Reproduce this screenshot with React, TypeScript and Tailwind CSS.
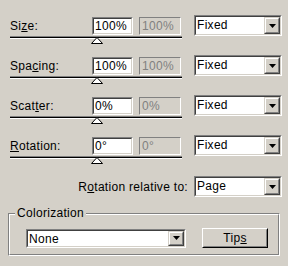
import React from "react";

const face = "bg-[#d4d0c8]";
const sunken =
  "border-t-[#808080] border-l-[#808080] border-b-white border-r-white border";
const innerSunken =
  "border-t-[#404040] border-l-[#404040] border-b-[#d4d0c8] border-r-[#d4d0c8] border";

function Sunken({
  className,
  children,
  disabled,
}: {
  className?: string;
  children?: React.ReactNode;
  disabled?: boolean;
}) {
  return (
    <div className={`${sunken} ${className ?? ""}`}>
      <div
        className={`h-full w-full ${
          disabled
            ? "border border-[#d4d0c8] bg-[#d4d0c8] text-[#808080]"
            : `${innerSunken} bg-white text-black`
        } flex items-center pl-[1px] overflow-hidden`}
      >
        {children}
      </div>
    </div>
  );
}

function ArrowButton() {
  return (
    <div className="h-full w-[16px] shrink-0 border border-t-[#d4d0c8] border-l-[#d4d0c8] border-b-[#404040] border-r-[#404040]">
      <div className="flex h-full w-full items-center justify-center border border-t-white border-l-white border-b-[#808080] border-r-[#808080] bg-[#d4d0c8]">
        <svg width="7" height="4" viewBox="0 0 7 4">
          <path d="M0 0h7L3.5 4z" fill="black" />
        </svg>
      </div>
    </div>
  );
}

function Select({ value, className }: { value: string; className?: string }) {
  return (
    <div className={`${sunken} ${className ?? ""}`}>
      <div className={`${innerSunken} flex h-full w-full bg-white`}>
        <div className="flex-1 pl-[1px] leading-[16px]">{value}</div>
        <ArrowButton />
      </div>
    </div>
  );
}

function Thumb() {
  return (
    <svg
      width="12"
      height="7"
      viewBox="0 0 12 7"
      className="absolute left-[81px] top-[22px]"
    >
      <path d="M6 0.5L11.5 6.5H0.5Z" fill="white" stroke="black" />
    </svg>
  );
}

function Row({
  label,
  value,
  ghost,
}: {
  label: React.ReactNode;
  value: string;
  ghost: string;
}) {
  return (
    <div className="flex h-[40px] items-start">
      <div className="relative ml-[10px] w-[172px]">
        <div className="mt-[2px] flex h-[18px] items-center">
          <div className="w-[82px]">{label}</div>
          <Sunken className="h-[18px] w-[41px]">{value}</Sunken>
          <Sunken className="ml-[6px] h-[18px] w-[42px]" disabled>
            {ghost}
          </Sunken>
        </div>
        <div className="mt-[1px] h-[3px] border-t border-t-[#808080] bg-black border-b border-b-white" />
        <Thumb />
      </div>
      <Select value="Fixed" className="ml-[12px] h-[21px] w-[88px]" />
    </div>
  );
}

export default function App() {
  return (
    <div
      className={`${face} h-[266px] w-[288px] overflow-hidden pt-[15px] text-[12px] tracking-[0.3px] text-black`}
      style={{ fontFamily: '"Liberation Sans", Arial, sans-serif' }}
    >
      <Row
        label={
          <span>
            Si<u>z</u>e:
          </span>
        }
        value="100%"
        ghost="100%"
      />
      <Row
        label={
          <span>
            Spa<u>c</u>ing:
          </span>
        }
        value="100%"
        ghost="100%"
      />
      <Row
        label={
          <span>
            Scat<u>t</u>er:
          </span>
        }
        value="0%"
        ghost="0%"
      />
      <Row
        label={
          <span>
            <u>R</u>otation:
          </span>
        }
        value="0°"
        ghost="0°"
      />
      <div className="mt-[1px] flex h-[21px] items-center">
        <div className="w-[190px] pr-[2px] text-right">
          R<u>o</u>tation relative to:
        </div>
        <Select value="Page" className="ml-[4px] h-[21px] w-[88px]" />
      </div>
      <div className="relative mx-[8px] mt-[16px] h-[43px] border border-t-[#808080] border-l-[#808080] border-b-white border-r-white">
        <div className="h-full w-full border border-t-white border-l-white border-b-[#808080] border-r-[#808080]">
          <span className={`${face} absolute left-[6px] top-[-8px] px-[2px] leading-[14px]`}>
            Colorization
          </span>
          <div className="flex items-center pl-[16px] pt-[13px]">
            <Select value="None" className="h-[19px] w-[160px]" />
            <div className="ml-[16px] h-[20px] w-[66px] border border-t-white border-l-white border-b-black border-r-black">
              <div className="flex h-full w-full items-center justify-center border border-t-[#d4d0c8] border-l-[#d4d0c8] border-b-[#808080] border-r-[#808080]">
                Tip<u>s</u>
              </div>
            </div>
          </div>
        </div>
      </div>
    </div>
  );
}
